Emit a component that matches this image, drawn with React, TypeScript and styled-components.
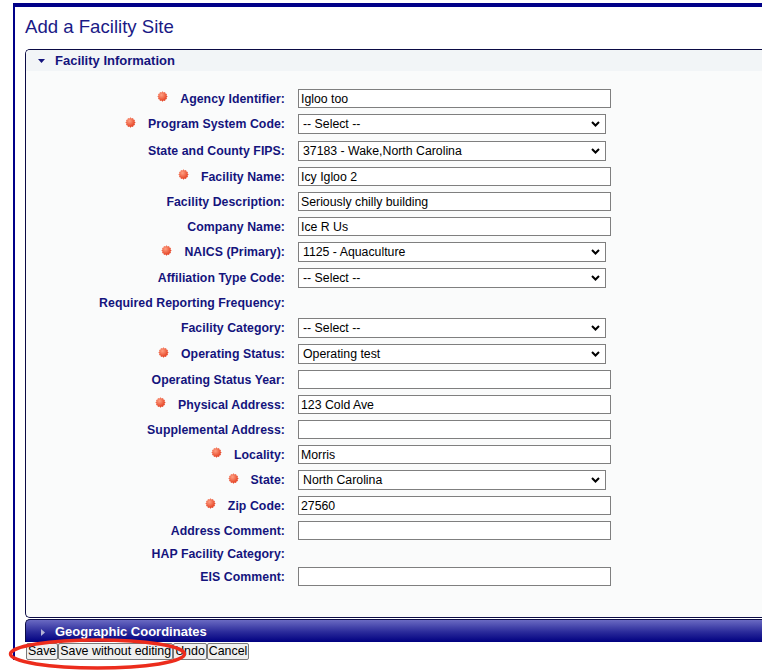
import React, { FC } from 'react';
import styled, { createGlobalStyle } from 'styled-components';

const GlobalStyle = createGlobalStyle`
  html, body {
    margin: 0;
    padding: 0;
    background: #ffffff;
    overflow: hidden;
  }
  body {
    font-family: "Liberation Sans", Arial, sans-serif;
  }
`;

const Page = styled.div`
  position: relative;
  width: 762px;
  height: 671px;
  overflow: hidden;
`;

const Frame = styled.div`
  margin: 3px 0 0 13px;
  border-top: 4px solid #000088;
  border-left: 2px solid #000088;
  padding-left: 10px;
  overflow: hidden;
`;

const Title = styled.h1`
  margin: 9px 0 11px 0;
  font-size: 18.6px;
  line-height: 22px;
  font-weight: normal;
  color: #1a1a86;
`;

const Panel = styled.div`
  width: 780px;
  border: 1px solid #0b0b45;
  border-right: none;
  border-radius: 5px 0 0 5px;
  background: #fafbfb;
  overflow: hidden;
`;

const PanelHead = styled.div`
  display: flex;
  align-items: center;
  gap: 10px;
  height: 21px;
  padding-left: 12px;
  background: #f2f5f7;
  font-size: 13px;
  font-weight: bold;
  color: #14147d;
`;

const Caret = styled.svg`
  flex: none;
`;

const FormGrid = styled.div`
  display: grid;
  grid-template-columns: 259px 313px;
  column-gap: 13px;
  padding: 15px 0 28px 0;
`;

const Label = styled.div<{ $h: number }>`
  display: flex;
  justify-content: flex-end;
  align-items: center;
  gap: 12px;
  height: ${(p) => p.$h}px;
  font-size: 12.3px;
  font-weight: bold;
  letter-spacing: 0.05px;
  color: #14147d;
  white-space: nowrap;
`;

const Cell = styled.div<{ $h: number }>`
  display: flex;
  align-items: center;
  height: ${(p) => p.$h}px;
`;

const TextBox = styled.input`
  box-sizing: border-box;
  width: 313px;
  height: 19px;
  margin: 0;
  padding: 0 2px;
  border: 1px solid #7f7f7f;
  background: #ffffff;
  font-family: "Liberation Sans", Arial, sans-serif;
  font-size: 12.3px;
  color: #000000;
  outline: none;
`;

const SelectWrap = styled.div`
  position: relative;
  width: 308px;
  height: 20px;
`;

const Select = styled.select`
  appearance: none;
  box-sizing: border-box;
  width: 308px;
  height: 20px;
  margin: 0;
  padding: 0 20px 0 4px;
  border: 1px solid #7f7f7f;
  border-radius: 0;
  background: #ffffff;
  font-family: "Liberation Sans", Arial, sans-serif;
  font-size: 12.3px;
  color: #000000;
`;

const Chevron = styled.svg`
  position: absolute;
  right: 6px;
  top: 7px;
  pointer-events: none;
`;

const GeoPanel = styled.div`
  width: 780px;
  margin-top: 1px;
  height: 22px;
  border-top: 1px solid #0b0b45;
  border-left: 1px solid #0b0b45;
  border-radius: 5px 0 0 0;
  background: linear-gradient(#6a6ac2, #2a2a9a 55%, #000080);
  overflow: hidden;
`;

const GeoHead = styled.div`
  display: flex;
  align-items: flex-start;
  gap: 10px;
  padding: 4px 0 0 15px;
  font-size: 13px;
  line-height: 15px;
  font-weight: bold;
  color: #ffffff;
`;

const ButtonRow = styled.div`
  display: flex;
  margin: 1px 0 0 1px;
`;

const Button = styled.button`
  height: 17px;
  margin: 0;
  padding: 0 1px;
  border: 1px solid #7a7a7a;
  border-radius: 2px;
  background: #efefef;
  font-family: "Liberation Sans", Arial, sans-serif;
  font-size: 12.4px;
  line-height: 13px;
  color: #000000;
`;

const Annotation = styled.svg`
  position: absolute;
  left: 0;
  top: 630px;
  pointer-events: none;
`;

const Star: FC = () => (
  <svg width="11" height="11" viewBox="-6 -6 12 12" style={{ marginTop: -4, flex: 'none' }}>
    <defs>
      <radialGradient id="starfill" cx="40%" cy="35%" r="65%">
        <stop offset="0%" stopColor="#ff9f82" />
        <stop offset="100%" stopColor="#e2391a" />
      </radialGradient>
    </defs>
    <polygon
      fill="url(#starfill)"
      points={Array.from({ length: 24 }, (_, i) => {
        const a = (i * Math.PI) / 12;
        const r = i % 2 === 0 ? 5.6 : 4.5;
        return `${(r * Math.sin(a)).toFixed(2)},${(-r * Math.cos(a)).toFixed(2)}`;
      }).join(' ')}
    />
  </svg>
);

type Field = {
  label: string;
  required?: boolean;
  kind: 'text' | 'select' | 'none';
  value?: string;
  h?: number;
};

const fields: Field[] = [
  { label: 'Agency Identifier:', required: true, kind: 'text', value: 'Igloo too' },
  { label: 'Program System Code:', required: true, kind: 'select', value: '-- Select --' },
  { label: 'State and County FIPS:', kind: 'select', value: ' 37183 - Wake,North Carolina', h: 27 },
  { label: 'Facility Name:', required: true, kind: 'text', value: 'Icy Igloo 2' },
  { label: 'Facility Description:', kind: 'text', value: 'Seriously chilly building' },
  { label: 'Company Name:', kind: 'text', value: 'Ice R Us' },
  { label: 'NAICS (Primary):', required: true, kind: 'select', value: '1125 - Aquaculture' },
  { label: 'Affiliation Type Code:', kind: 'select', value: '-- Select --' },
  { label: 'Required Reporting Frequency:', kind: 'none', h: 24 },
  { label: 'Facility Category:', kind: 'select', value: '-- Select --' },
  { label: 'Operating Status:', required: true, kind: 'select', value: 'Operating test' },
  { label: 'Operating Status Year:', kind: 'text', value: '' },
  { label: 'Physical Address:', required: true, kind: 'text', value: '123 Cold Ave' },
  { label: 'Supplemental Address:', kind: 'text', value: '' },
  { label: 'Locality:', required: true, kind: 'text', value: 'Morris' },
  { label: 'State:', required: true, kind: 'select', value: 'North Carolina' },
  { label: 'Zip Code:', required: true, kind: 'text', value: '27560' },
  { label: 'Address Comment:', kind: 'text', value: '' },
  { label: 'HAP Facility Category:', kind: 'none', h: 21 },
  { label: 'EIS Comment:', kind: 'text', value: '' },
];

const rowHeight = (f: Field) => f.h ?? (f.kind === 'select' ? 26 : 25);

const FieldRow: FC<{ field: Field }> = ({ field }) => {
  const h = rowHeight(field);
  return (
    <>
      <Label $h={h}>
        {field.required && <Star />}
        <span>{field.label}</span>
      </Label>
      <Cell $h={h}>
        {field.kind === 'text' && <TextBox type="text" defaultValue={field.value} />}
        {field.kind === 'select' && (
          <SelectWrap>
            <Select defaultValue={field.value}>
              <option value={field.value}>{field.value}</option>
            </Select>
            <Chevron width="9" height="6" viewBox="0 0 9 6">
              <polyline points="1,1 4.5,4.5 8,1" fill="none" stroke="#000" strokeWidth="2" />
            </Chevron>
          </SelectWrap>
        )}
      </Cell>
    </>
  );
};

export function App() {
  return (
    <Page>
      <GlobalStyle />
      <Frame>
        <Title>Add a Facility Site</Title>
        <Panel>
          <PanelHead>
            <Caret width="7" height="4" viewBox="0 0 7 4">
              <polygon points="0,0 7,0 3.5,4" fill="#14147d" />
            </Caret>
            Facility Information
          </PanelHead>
          <FormGrid>
            {fields.map((f) => (
              <FieldRow key={f.label} field={f} />
            ))}
          </FormGrid>
        </Panel>
        <GeoPanel>
          <GeoHead>
            <Caret width="4" height="7" viewBox="0 0 4 7" style={{ marginTop: 5 }}>
              <polygon points="0,0 4,3.5 0,7" fill="#b4b4d6" />
            </Caret>
            Geographic Coordinates
          </GeoHead>
        </GeoPanel>
        <ButtonRow>
          <Button>Save</Button>
          <Button>Save without editing</Button>
          <Button>Undo</Button>
          <Button>Cancel</Button>
        </ButtonRow>
      </Frame>
      <Annotation width="200" height="41" viewBox="0 630 200 41">
        <ellipse cx="97.5" cy="654" rx="87" ry="14" fill="none" stroke="#ec2c1c" strokeWidth="3.5" />
      </Annotation>
    </Page>
  );
}

export default App;
